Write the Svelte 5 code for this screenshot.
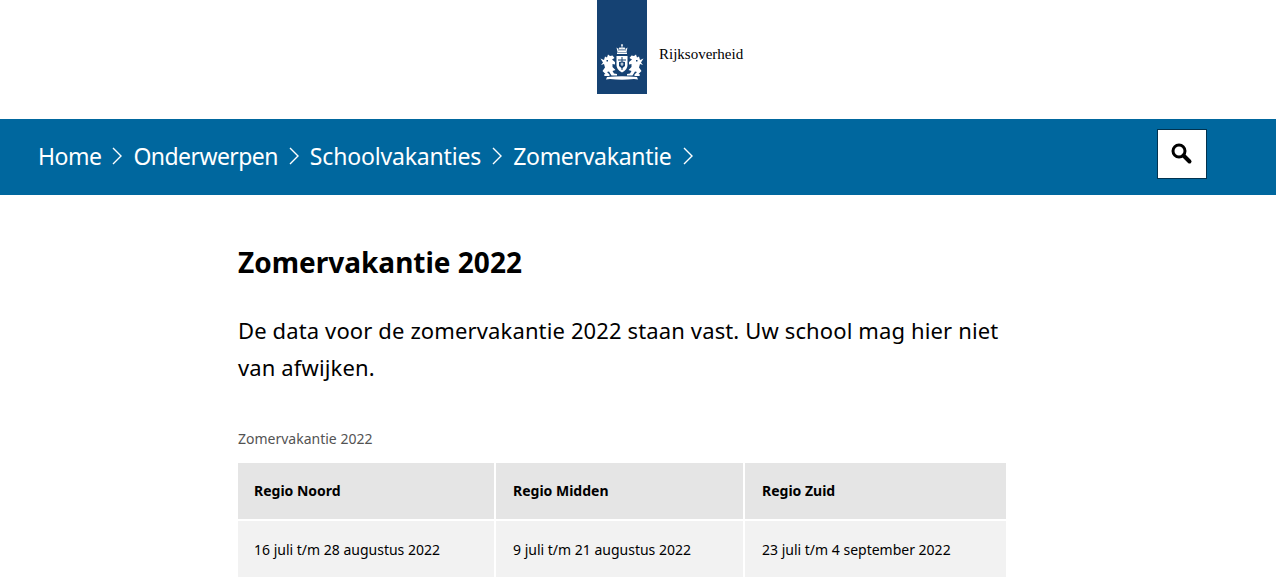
<script>
  const crumbs = ['Home', 'Onderwerpen', 'Schoolvakanties', 'Zomervakantie'];
  const head = ['Regio Noord', 'Regio Midden', 'Regio Zuid'];
  const row = ['16 juli t/m 28 augustus 2022', '9 juli t/m 21 augustus 2022', '23 juli t/m 4 september 2022'];
</script>

<div class="page">
  <header class="top">
    <div class="mark">
      <svg viewBox="0 0 50 94" width="50" height="94" aria-hidden="true">
        <g fill="#fff">
          <path d="M20.500 52 L19.500 47.500 L21.500 49 L23 47 L24.300 48.500 L24.600 46 L23.800 45 L25 44 L26.200 45 L25.400 46 L25.700 48.500 L27 47 L28.500 49 L30.500 47.500 L29.500 52 Z" />
          <rect x="20" y="52.500" width="10" height="1.500" />
          <path d="M19.500 56 H30.500 V65 Q30.500 70 25 72.500 Q19.500 70 19.500 65 Z" />
          <path d="M3.500 58.500 L7 60 L8 56.500 L10 57.500 L11 54.500 L13 56 L15.500 55.500 L17.500 58 L15 59.500 L18 62 L18 64.500 L15.500 64 L15.500 67 L18.500 70 L15.500 71 L17 73.500 L20 74 L20 75.500 L14.500 75.500 L12 71.500 L10 72 L12.500 74.500 L12.500 76 L7.500 76 L7 74.500 L8.500 74 L5.500 71 L8 67.500 L7 64 L4 65 L6 62.500 Z" />
          <path d="M46.500 58.500 L43 60 L42 56.500 L40 57.500 L39 54.500 L37 56 L34.500 55.500 L32.500 58 L35 59.500 L32 62 L32 64.500 L34.500 64 L34.500 67 L31.500 70 L34.500 71 L33 73.500 L30 74 L30 75.500 L35.500 75.500 L38 71.500 L40 72 L37.500 74.500 L37.500 76 L42.500 76 L43 74.500 L41.500 74 L44.500 71 L42 67.500 L43 64 L46 65 L44 62.500 Z" />
          <path d="M10 77 Q25 75.500 40 77 L41 79.500 L37 79 Q25 80.500 13 79 L9 79.500 Z" />
        </g>
        <g fill="#154273">
          <rect x="21" y="49.500" width="8" height="0.800" />
          <rect x="24.500" y="57" width="1" height="13" />
          <rect x="21" y="59.500" width="8" height="1" />
          <path d="M22 62 L25 61.500 L28 62 L28 66 L25 68.500 L22 66 Z" />
          <rect x="9.500" y="60" width="1.500" height="1.500" />
          <rect x="39" y="60" width="1.500" height="1.500" />
        </g>
        <path d="M23.500 64 H26.500 M25 62.500 V66" stroke="#fff" stroke-width="0.900" fill="none" />
      </svg>
    </div>
    <span class="word">Rijksoverheid</span>
  </header>

  <nav class="bar">
    <ol class="crumbs">
      {#each crumbs as c}
        <li>
          <span>{c}</span>
          <svg viewBox="0 0 10 18" width="10" height="18" aria-hidden="true">
            <path d="M1 1 L9 9 L1 17" fill="none" stroke="#fff" stroke-width="1.400" />
          </svg>
        </li>
      {/each}
    </ol>
    <button class="search" aria-label="Zoeken">
      <svg viewBox="0 0 22 22" width="22" height="22" aria-hidden="true">
        <circle cx="8" cy="8" r="6" fill="none" stroke="#000" stroke-width="3" />
        <path d="M12.500 12.500 L18.500 18.500" stroke="#000" stroke-width="4" stroke-linecap="round" />
      </svg>
    </button>
  </nav>

  <main class="content">
    <h1>Zomervakantie 2022</h1>
    <p class="intro">De data voor de zomervakantie 2022 staan vast. Uw school mag hier niet van afwijken.</p>
    <div class="caption">Zomervakantie 2022</div>
    <div class="table">
      {#each head as h}<div class="th">{h}</div>{/each}
      {#each row as r}<div class="td">{r}</div>{/each}
    </div>
  </main>
</div>

<style>
  :global(body) { margin: 0; background: #fff; }
  .page {
    height: 577px;
    overflow: hidden;
    font-family: "Noto Sans", "Open Sans", sans-serif;
    color: #000;
  }
  .top { height: 119px; display: flex; align-items: flex-start; gap: 12px; padding-left: 597px; }
  .mark { width: 50px; height: 94px; background: #154273; }
  .mark svg { display: block; }
  .word {
    font-family: "Liberation Serif", serif;
    font-size: 15px;
    line-height: 16px;
    margin-top: 46px;
    color: #000;
  }
  .bar {
    height: 76px;
    background: #00679e;
    display: flex;
    align-items: flex-start;
    justify-content: space-between;
    padding: 0 69px 0 38px;
  }
  .crumbs {
    list-style: none;
    margin: 0;
    padding: 0;
    height: 74px;
    display: flex;
    align-items: center;
    gap: 11px;
    color: #fff;
    font-size: 23px;
    letter-spacing: -0.300px;
  }
  .crumbs li { display: flex; align-items: center; gap: 11px; }
  .crumbs li:nth-child(1) { letter-spacing: -0.500px; }
  .crumbs li:nth-child(2) { letter-spacing: -0.570px; }
  .crumbs li:nth-child(3) { letter-spacing: -0.170px; }
  .crumbs li svg { flex: none; }
  .search {
    width: 50px;
    height: 50px;
    margin-top: 10px;
    padding: 0;
    background: #fff;
    border: 1px solid #01324f;
    display: flex;
    align-items: center;
    justify-content: center;
  }
  .content { width: 768px; margin-left: 238px; }
  h1 {
    margin: 0;
    padding-top: 47px;
    font-size: 28px;
    line-height: 40px;
    font-weight: 700;
  }
  .intro {
    margin: 30px 0 0;
    font-size: 22px;
    letter-spacing: 0.130px;
    line-height: 37px;
    width: 768px;
  }
  .caption {
    margin-top: 43px;
    font-size: 14px;
    line-height: 20px;
    color: #535353;
  }
  .table {
    margin-top: 14px;
    display: grid;
    grid-template-columns: 256px 247px 261px;
    grid-auto-rows: 56px;
    gap: 2px;
  }
  .th, .td {
    display: flex;
    align-items: center;
    padding-left: 16px;
    font-size: 14px;
  }
  .th { background: #e5e5e5; font-weight: 700; padding-bottom: 1px; box-sizing: border-box; }
  .td { background: #f2f2f2; }
  .td:nth-child(n+5), .th:nth-child(n+2) { padding-left: 17px; }
</style>
